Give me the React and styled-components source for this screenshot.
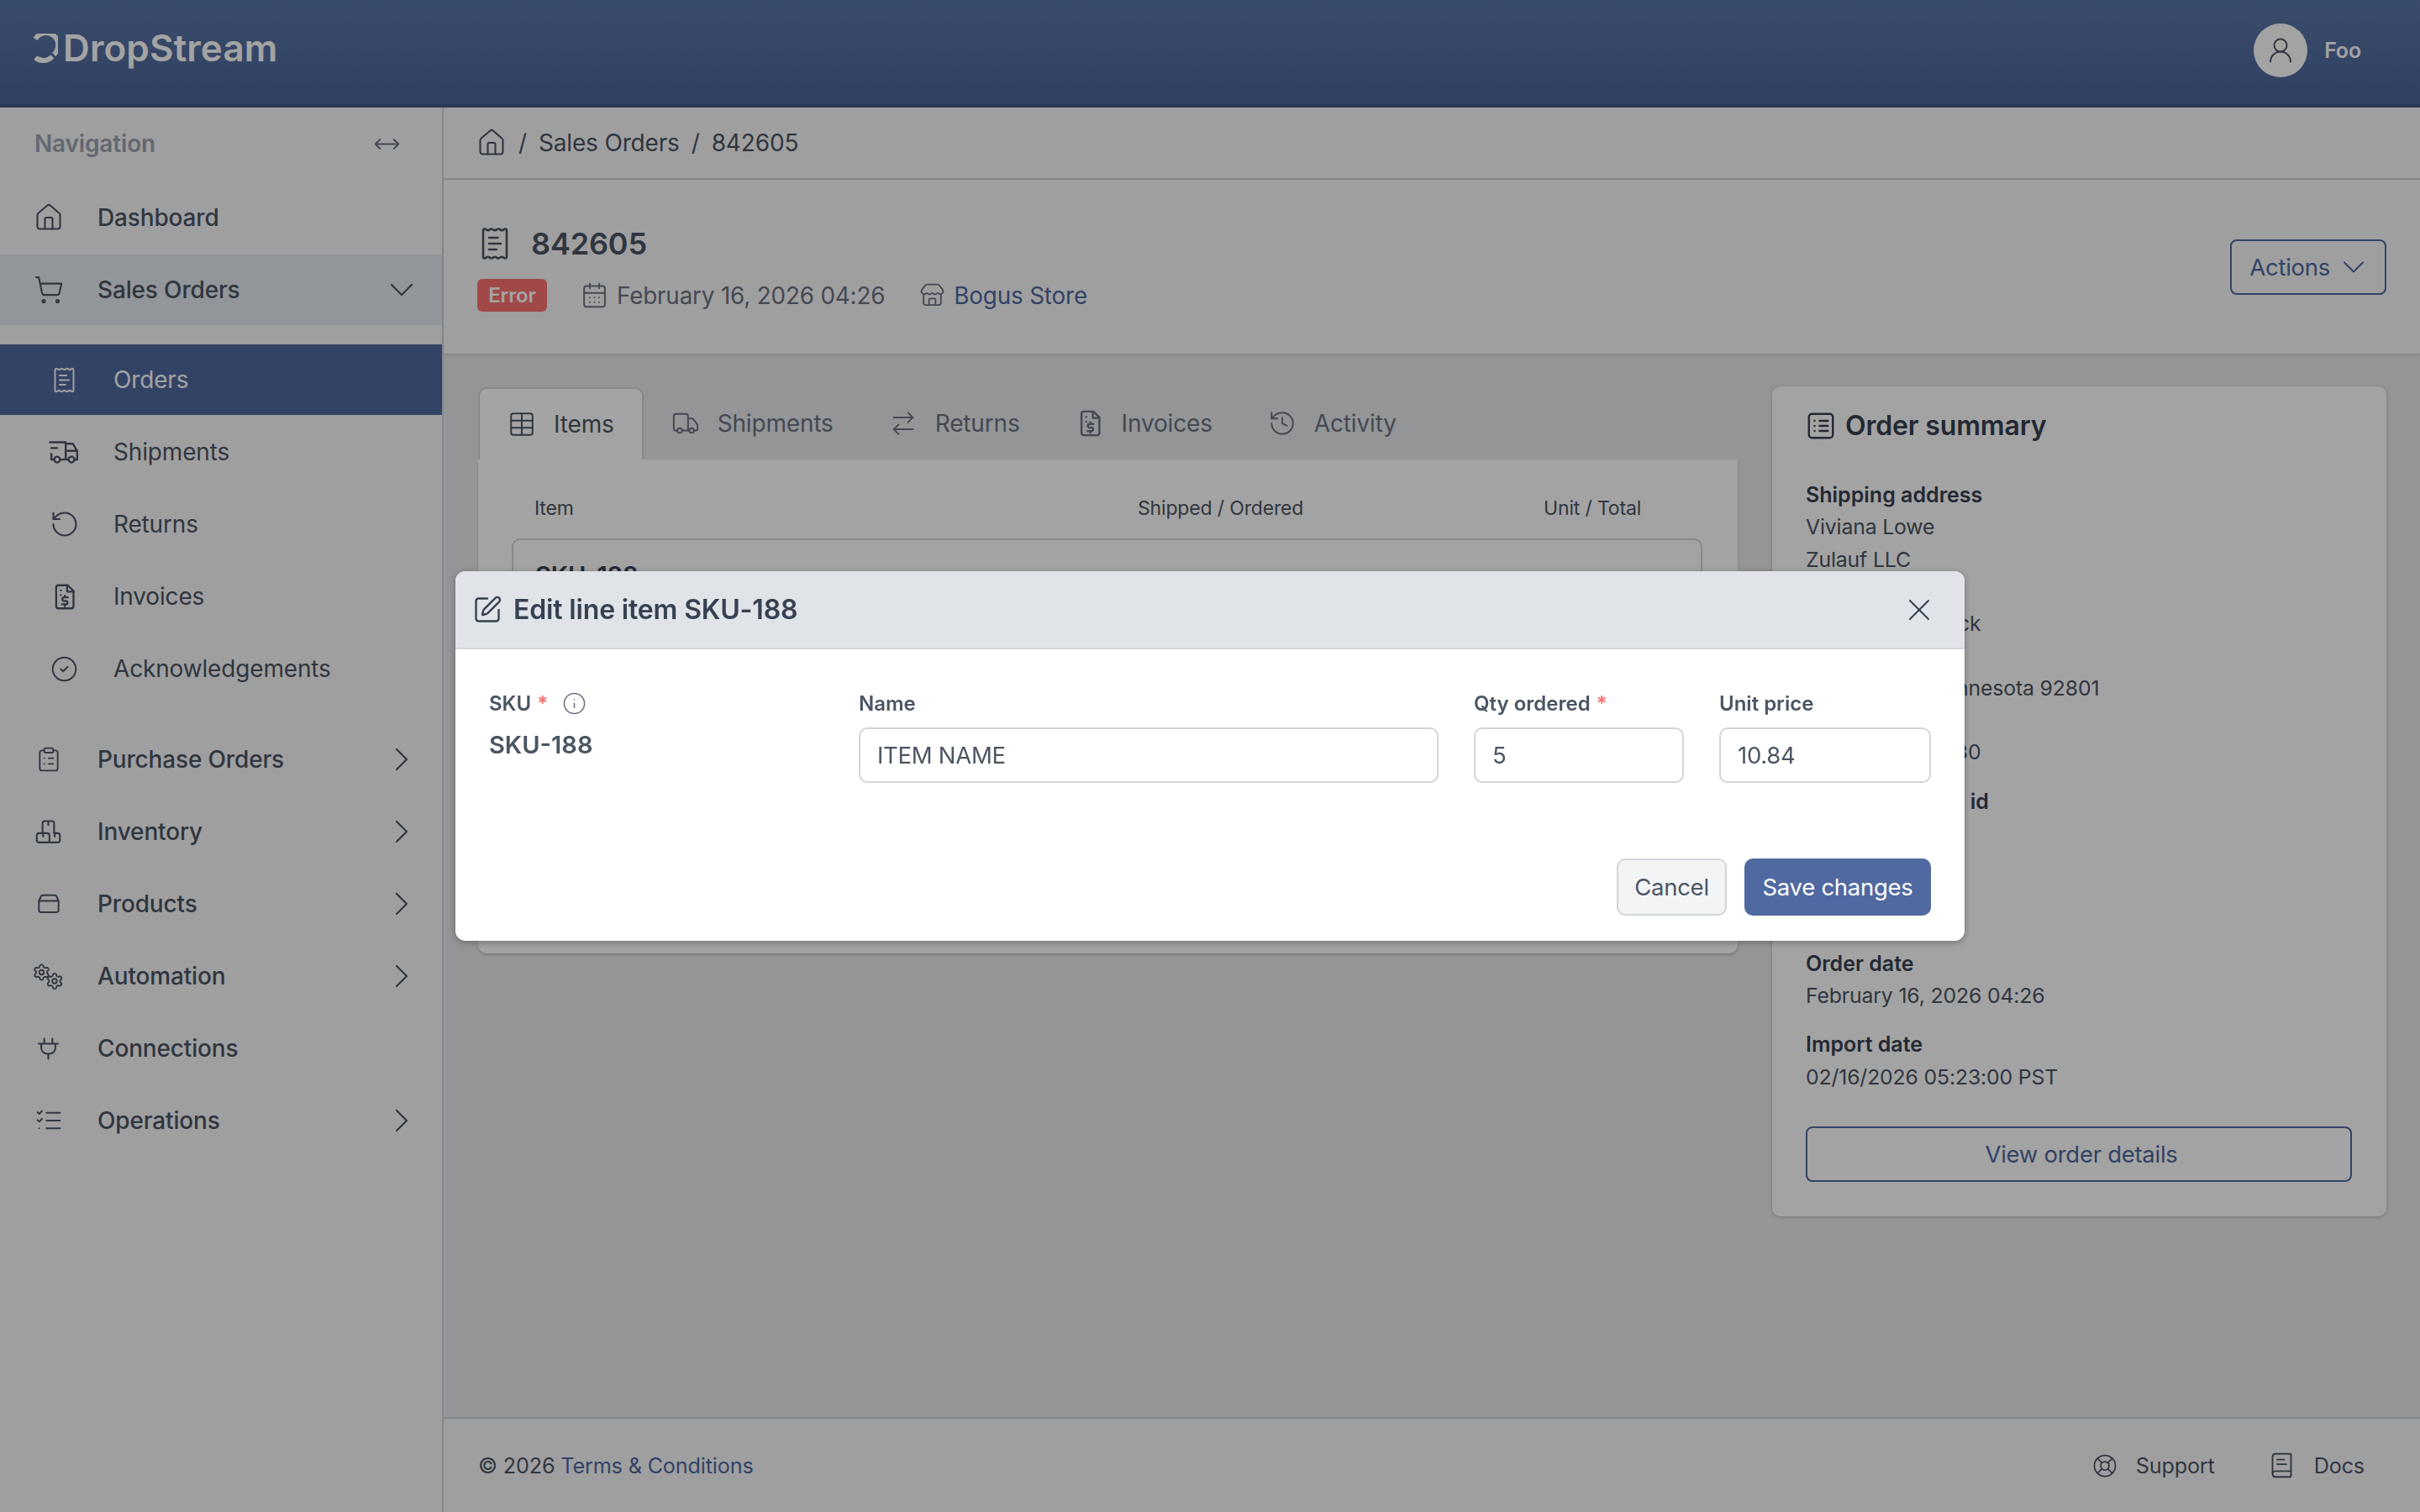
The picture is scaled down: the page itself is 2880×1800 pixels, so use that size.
import React from "react";
import styled, { createGlobalStyle } from "styled-components";
import {
  House,
  ShoppingCart,
  ReceiptText,
  RotateCcw,
  CircleCheck,
  ClipboardList,
  ChevronDown,
  ChevronRight,
  MoveHorizontal,
  UserRound,
  CalendarDays,
  Store,
  Table,
  Truck,
  ArrowRightLeft,
  History,
  SquarePen,
  Info,
  X,
  LifeBuoy,
  BookText,
  Settings,
} from "lucide-react";
import { TbTruckDelivery } from "react-icons/tb";

const primary = "#5069a0";
const panel = "#f9f9fb";
const font = `Inter, "Liberation Sans", sans-serif`;

const GlobalStyle = createGlobalStyle`
  * { box-sizing: border-box; }
  html, body { margin: 0; padding: 0; }
  body {
    font-family: ${font};
    letter-spacing: -0.01em;
    background: #e7e9ec;
    color: #374151;
  }
  svg { flex: none; }
`;

const Page = styled.div`
  display: grid;
  grid-template-columns: 528px 1fr;
  grid-template-rows: 128px 1fr;
  width: 2880px;
  height: 1800px;
  overflow: hidden;
`;

const TopBar = styled.header`
  grid-column: 1 / 3;
  display: flex;
  align-items: center;
  justify-content: space-between;
  padding: 0 70px 4px 34px;
  background: linear-gradient(#5b77a9, #4d6597);
  border-bottom: 4px solid #445a8c;
`;

const Logo = styled.div`
  display: flex;
  align-items: center;
  gap: 6px;
  margin-top: -6px;
  color: #fff;
  font-size: 44px;
  font-weight: 600;
  letter-spacing: 0.1px;
  line-height: 1;
`;

const UserMenu = styled.div`
  display: flex;
  align-items: center;
  gap: 20px;
  color: #fff;
  font-size: 25px;
  font-weight: 600;
`;

const Avatar = styled.div`
  display: flex;
  align-items: center;
  justify-content: center;
  width: 64px;
  height: 64px;
  border-radius: 50%;
  background: #fff;
  color: #4b5563;
`;

const Sidebar = styled.aside`
  background: ${panel};
  border-right: 2px solid #d1d5db;
`;

const NavHeader = styled.div`
  display: flex;
  align-items: center;
  justify-content: space-between;
  height: 86px;
  margin-bottom: 3px;
  padding: 0 49px 0 41px;
  color: #9ca3af;
  font-size: 28px;
  font-weight: 600;
`;

const NavList = styled.nav`
  display: flex;
  flex-direction: column;
  gap: 2px;
`;

const NavRow = styled.div`
  display: flex;
  align-items: center;
  height: 84px;
  padding: 0 24px 0 ${(p) => (p.$sub ? 60 : 41)}px;
  background: ${(p) => (p.$active ? primary : p.$open ? "#e4e9f0" : "transparent")};
  color: ${(p) => (p.$active ? "#fff" : "#4b5563")};
  font-size: 28px;
  font-weight: ${(p) => (p.$sub ? 400 : 500)};
`;

const NavIcon = styled.span`
  display: flex;
  justify-content: center;
  flex: none;
  width: 33px;
  margin-right: 42px;
`;

const NavLabel = styled.span`
  flex: 1;
`;

const SubNav = styled.div`
  display: flex;
  flex-direction: column;
  gap: 2px;
  margin: 21px 0 22px;
`;

const Main = styled.main`
  display: flex;
  flex-direction: column;
  min-width: 0;
`;

const Crumbs = styled.div`
  display: flex;
  align-items: center;
  gap: 14px;
  height: 86px;
  padding-left: 39px;
  background: ${panel};
  border-bottom: 2px solid #d1d5db;
  color: #4b5563;
  font-size: 28px;
`;

const PageHead = styled.section`
  display: flex;
  align-items: center;
  justify-content: space-between;
  height: 207px;
  padding: 0 40px;
  background: ${panel};
  box-shadow: 0 2px 4px rgba(0, 0, 0, 0.12);
`;

const HeadText = styled.div`
  display: flex;
  flex-direction: column;
  gap: 20px;
  padding-top: 4px;
`;

const Title = styled.h1`
  display: flex;
  align-items: center;
  gap: 22px;
  margin: 0;
  color: #4b5563;
  font-size: 36px;
  font-weight: 600;
  line-height: 44px;
`;

const Meta = styled.div`
  display: flex;
  align-items: center;
  color: #6b7280;
  font-size: 27.8px;
`;

const Badge = styled.span`
  width: 83px;
  height: 39px;
  margin-right: 40px;
  border-radius: 6px;
  background: #fc7272;
  color: #fff;
  font-size: 24px;
  font-weight: 600;
  line-height: 39px;
  text-align: center;
`;

const MetaItem = styled.span`
  display: flex;
  align-items: center;
  gap: 10px;
  margin-right: 41px;
`;

const Link = styled.a`
  color: ${primary};
`;

const OutlineButton = styled.button`
  display: flex;
  align-items: center;
  justify-content: center;
  gap: 6px;
  height: 66px;
  width: ${(p) => (p.$wide ? "100%" : "auto")};
  padding: 0 15px 0 21px;
  border: 2px solid ${primary};
  border-radius: 8px;
  background: transparent;
  color: ${primary};
  font-family: ${font};
  font-size: 27.5px;
  letter-spacing: -0.01em;
`;

const Content = styled.div`
  flex: 1;
  display: grid;
  grid-template-columns: 1fr 731px;
  gap: 41px;
  align-items: start;
  padding: 40px 40px 0 41px;
`;

const TabBar = styled.div`
  display: flex;
  height: 86px;
`;

const Tab = styled.div`
  display: flex;
  align-items: center;
  gap: 21px;
  padding: 0 33px;
  border: ${(p) => (p.$active ? "2px solid #d1d5db" : "none")};
  border-bottom: none;
  border-radius: 10px 10px 0 0;
  background: ${(p) => (p.$active ? "#fff" : "transparent")};
  color: ${(p) => (p.$active ? "#4b5563" : "#6b7280")};
  font-size: 28px;
`;

const TabBody = styled.div`
  height: 588px;
  padding: 0 42px 0 40px;
  background: #fff;
  border-radius: 0 0 10px 10px;
  box-shadow: 0 2px 3px rgba(0, 0, 0, 0.18);
`;

const ItemsHead = styled.div`
  display: grid;
  grid-template-columns: 718px 483px auto;
  align-items: center;
  height: 94px;
  padding: 22px 0 0 27px;
  color: #4b5563;
  font-size: 23px;
`;

const ItemCard = styled.div`
  height: 400px;
  padding: 24px 26px;
  border: 2px solid #d1d5db;
  border-radius: 10px;
  color: #374151;
  font-size: 29px;
  font-weight: 600;
`;

const Summary = styled.section`
  margin-top: -1px;
  padding: 25px 41px 41px 40px;
  border-radius: 10px;
  background: #fff;
  box-shadow: 0 1px 4px rgba(0, 0, 0, 0.2);
`;

const SummaryTitle = styled.h2`
  display: flex;
  align-items: center;
  gap: 11px;
  margin: 0 0 41px;
  color: #374151;
  font-size: 32px;
  font-weight: 600;
  line-height: 44px;
`;

const InfoGroup = styled.div`
  margin-bottom: 20px;
  color: #4b5563;
  font-size: 24.8px;
  line-height: 38.3px;
`;

const InfoLabel = styled.div`
  font-size: 25px;
  font-weight: 600;
  letter-spacing: 0;
  color: #374151;
`;

const Details = styled.div`
  margin-top: 40px;
`;

const Footer = styled.footer`
  display: flex;
  align-items: center;
  justify-content: space-between;
  height: 113px;
  padding: 0 66px 0 41px;
  background: ${panel};
  border-top: 2px solid #d1d5db;
  color: #4b5563;
  font-size: 25.2px;
`;

const FooterLinks = styled.div`
  display: flex;
  gap: 63px;
`;

const FooterLink = styled.span`
  display: flex;
  align-items: center;
  gap: 22px;
`;

const Backdrop = styled.div`
  position: fixed;
  inset: 0;
  display: flex;
  align-items: center;
  justify-content: center;
  background: rgba(0, 0, 0, 0.36);
`;

const Modal = styled.div`
  width: 1796px;
  height: 440px;
  display: flex;
  flex-direction: column;
  overflow: hidden;
  border-radius: 12px;
  background: #fff;
  box-shadow: 0 2px 8px rgba(0, 0, 0, 0.3);
`;

const ModalHead = styled.div`
  display: flex;
  align-items: center;
  justify-content: space-between;
  flex: none;
  height: 93px;
  padding: 0 32px 0 20px;
  background: #e0e3e8;
  border-bottom: 2px solid #d1d5db;
`;

const ModalTitle = styled.h3`
  display: flex;
  align-items: center;
  gap: 13px;
  margin: 0;
  color: #374151;
  font-size: 32px;
  font-weight: 600;
`;

const FormGrid = styled.div`
  flex: 1;
  display: grid;
  grid-template-columns: 398px 690px 250px 252px;
  gap: 42px;
  padding: 48px 40px 0 40px;
`;

const Field = styled.div`
  display: flex;
  flex-direction: column;
  gap: 13px;
`;

const FieldLabel = styled.label`
  display: flex;
  align-items: center;
  gap: 7px;
  height: 32px;
  color: #4b5563;
  font-size: 24px;
  font-weight: 600;
  letter-spacing: 0;
`;

const Required = styled.span`
  color: #f87171;
`;

const InfoMark = styled.span`
  display: flex;
  margin-left: 10px;
  color: #6b7280;
`;

const ReadOnly = styled.div`
  margin-top: 3px;
  color: #4b5563;
  font-size: 29px;
  font-weight: 600;
  letter-spacing: 0;
`;

const Input = styled.input`
  width: 100%;
  height: 66px;
  padding: 0 20px;
  border: 2px solid #d1d5db;
  border-radius: 10px;
  background: #fff;
  color: #4b5563;
  font-family: ${font};
  font-size: 27.5px;
  letter-spacing: -0.01em;
`;

const ModalFoot = styled.div`
  display: flex;
  justify-content: flex-end;
  gap: 21px;
  padding: 0 40px 30px;
`;

const CancelButton = styled.button`
  width: 131px;
  height: 68px;
  border: 2px solid #d1d5db;
  border-radius: 10px;
  background: #f3f4f6;
  color: #4b5563;
  font-family: ${font};
  font-size: 27.5px;
  letter-spacing: -0.01em;
`;

const SaveButton = styled.button`
  width: 222px;
  height: 68px;
  border: none;
  border-radius: 10px;
  background: ${primary};
  color: #fff;
  font-family: ${font};
  font-size: 27.5px;
  letter-spacing: -0.01em;
`;

// the icon packages have no match for these ones, so they are drawn here
const LogoMark = () => (
  <svg width="35" height="35" viewBox="0 0 35 35" fill="none" stroke="currentColor" strokeWidth="6">
    <path d="M8.18 6.39A14.500 14.500 0 1 1 30.060 24.750" />
    <path d="M28.280 27.200A14.500 14.500 0 0 1 8.180 28.610" />
  </svg>
);

const Outline = ({ size = 24, width = 1.6, children }) => (
  <svg
    width={size}
    height={size}
    viewBox="0 0 24 24"
    fill="none"
    stroke="currentColor"
    strokeWidth={width}
    strokeLinecap="round"
    strokeLinejoin="round"
  >
    {children}
  </svg>
);

const InvoiceIcon = ({ size }) => (
  <Outline size={size} width={1.7}>
    <path d="M7 2h8l5 5v13a2 2 0 0 1-2 2H7a2 2 0 0 1-2-2V4a2 2 0 0 1 2-2Z" />
    <path d="M14.500 2v5.500H20" />
    <path d="M9 6.500h.01M9 10.500h.01" />
    <path d="M15 12.500h-3.200a1.500 1.500 0 0 0 0 3h1.400a1.500 1.500 0 0 1 0 3H10M12.500 11v1.500M12.500 18.500V20" />
  </Outline>
);

const PackagesIcon = ({ size }) => (
  <Outline size={size} width={1.5}>
    <path d="M7 12.500V4.500a2 2 0 0 1 2-2h6a2 2 0 0 1 2 2v8M12 2.500V6" />
    <rect x="2" y="13" width="11" height="8" rx="2" />
    <path d="M7.500 13v3M17 13h3a2 2 0 0 1 2 2v4a2 2 0 0 1-2 2h-7M17.500 13v3" />
  </Outline>
);

const ProductIcon = ({ size }) => (
  <Outline size={size} width={1.7}>
    <path d="M2 9 4 4.500A2 2 0 0 1 5.800 3.200h12.400A2 2 0 0 1 20 4.500L22 9v9.500a2 2 0 0 1-2 2H4a2 2 0 0 1-2-2Z" />
    <path d="M2 9h20" />
  </Outline>
);

const GearsIcon = () => (
  <svg width="33" height="33" viewBox="0 0 33 33" overflow="visible">
    <Settings x="-2.500" y="0.500" width="22" height="22" strokeWidth="2" />
    <Settings x="13" y="11" width="22" height="22" strokeWidth="2" />
  </svg>
);

const PlugIcon = ({ size }) => (
  <Outline size={size} width={1.7}>
    <path d="M8 2v5M16 2v5M2.500 7h19M5 7v4a6 6 0 0 0 6 6h2a6 6 0 0 0 6-6V7M12 17v5" />
  </Outline>
);

const TaskListIcon = ({ size }) => (
  <Outline size={size} width={1.5}>
    <path d="M10 5h12M10 12h12M10 19h12" />
    <path d="m2 4.500 1.500 1.500L6 3.500M2 11.500l1.500 1.500L6 10.500M3.500 19h.01" />
  </Outline>
);

const SummaryIcon = ({ size }) => (
  <Outline size={size} width={1.6}>
    <rect x="2.500" y="2.500" width="19" height="19" rx="2.500" />
    <path d="M7 8h.01M7 12h.01M7 16h.01M11 8h6.500M11 12h6.500M11 16h6.500" />
  </Outline>
);

const NavItem = ({ icon, label, chevron, ...rest }) => (
  <NavRow {...rest}>
    <NavIcon>{icon}</NavIcon>
    <NavLabel>{label}</NavLabel>
    {chevron === "down" && <ChevronDown size={48} strokeWidth={1.1} />}
    {chevron === "right" && <ChevronRight size={48} strokeWidth={1.1} />}
  </NavRow>
);

const sw = 1.4;

const subItems = [
  { label: "Orders", icon: <ReceiptText size={33} strokeWidth={sw} />, active: true },
  { label: "Shipments", icon: <TbTruckDelivery size={41} strokeWidth={1.4} /> },
  { label: "Returns", icon: <RotateCcw size={36} strokeWidth={sw} /> },
  { label: "Invoices", icon: <InvoiceIcon size={33} /> },
  { label: "Acknowledgements", icon: <CircleCheck size={33} strokeWidth={sw} /> },
];

const lowerItems = [
  { label: "Purchase Orders", icon: <ClipboardList size={32} strokeWidth={sw} />, chevron: "right" },
  { label: "Inventory", icon: <PackagesIcon size={33} />, chevron: "right" },
  { label: "Products", icon: <ProductIcon size={28} />, chevron: "right" },
  { label: "Automation", icon: <GearsIcon />, chevron: "right" },
  { label: "Connections", icon: <PlugIcon size={29} /> },
  { label: "Operations", icon: <TaskListIcon size={32} />, chevron: "right" },
];

const tabs = [
  { label: "Items", icon: <Table size={34} strokeWidth={sw} />, active: true },
  { label: "Shipments", icon: <Truck size={34} strokeWidth={sw} /> },
  { label: "Returns", icon: <ArrowRightLeft size={34} strokeWidth={sw} /> },
  { label: "Invoices", icon: <InvoiceIcon size={34} /> },
  { label: "Activity", icon: <History size={34} strokeWidth={sw} /> },
];

export default function App() {
  return (
    <>
      <GlobalStyle />
      <Page>
        <TopBar>
          <Logo>
            <LogoMark />
            DropStream
          </Logo>
          <UserMenu>
            <Avatar>
              <UserRound size={36} strokeWidth={1.3} />
            </Avatar>
            Foo
          </UserMenu>
        </TopBar>

        <Sidebar>
          <NavHeader>
            Navigation
            <MoveHorizontal size={33} strokeWidth={1.3} color="#6b7280" />
          </NavHeader>
          <NavList>
            <NavItem icon={<House size={36} strokeWidth={sw} />} label="Dashboard" />
            <NavItem
              $open
              icon={<ShoppingCart size={36} strokeWidth={sw} />}
              label="Sales Orders"
              chevron="down"
            />
            <SubNav>
              {subItems.map((item) => (
                <NavItem key={item.label} $sub $active={item.active} icon={item.icon} label={item.label} />
              ))}
            </SubNav>
            {lowerItems.map((item) => (
              <NavItem key={item.label} icon={item.icon} label={item.label} chevron={item.chevron} />
            ))}
          </NavList>
        </Sidebar>

        <Main>
          <Crumbs>
            <House size={36} strokeWidth={sw} />
            <span>/</span>
            <span>Sales Orders</span>
            <span>/</span>
            <span>842605</span>
          </Crumbs>

          <PageHead>
            <HeadText>
              <Title>
                <ReceiptText size={42} strokeWidth={1.5} />
                842605
              </Title>
              <Meta>
                <Badge>Error</Badge>
                <MetaItem>
                  <CalendarDays size={33} strokeWidth={sw} />
                  February 16, 2026 04:26
                </MetaItem>
                <MetaItem>
                  <Store size={31} strokeWidth={sw} />
                  <Link>Bogus Store</Link>
                </MetaItem>
              </Meta>
            </HeadText>
            <OutlineButton>
              Actions
              <ChevronDown size={44} strokeWidth={1.1} />
            </OutlineButton>
          </PageHead>

          <Content>
            <div>
              <TabBar>
                {tabs.map((tab) => (
                  <Tab key={tab.label} $active={tab.active}>
                    {tab.icon}
                    {tab.label}
                  </Tab>
                ))}
              </TabBar>
              <TabBody>
                <ItemsHead>
                  <span>Item</span>
                  <span>Shipped / Ordered</span>
                  <span>Unit / Total</span>
                </ItemsHead>
                <ItemCard>SKU-188</ItemCard>
              </TabBody>
            </div>

            <Summary>
              <SummaryTitle>
                <SummaryIcon size={36} />
                Order summary
              </SummaryTitle>
              <InfoGroup>
                <InfoLabel>Shipping address</InfoLabel>
                <div>Viviana Lowe</div>
                <div>Zulauf LLC</div>
                <div>&nbsp;</div>
                <div>West Port Merrick</div>
                <div>&nbsp;</div>
                <div>East Hetties, Minnesota 92801</div>
                <div>&nbsp;</div>
                <div>+1 555 0100 2330</div>
              </InfoGroup>
              <InfoGroup>
                <InfoLabel>Customer party id</InfoLabel>
                <div>&nbsp;</div>
              </InfoGroup>
              <InfoGroup>
                <div>&nbsp;</div>
                <div>&nbsp;</div>
              </InfoGroup>
              <InfoGroup>
                <InfoLabel>Order date</InfoLabel>
                <div>February 16, 2026 04:26</div>
              </InfoGroup>
              <InfoGroup>
                <InfoLabel>Import date</InfoLabel>
                <div>02/16/2026 05:23:00 PST</div>
              </InfoGroup>
              <Details>
                <OutlineButton $wide>View order details</OutlineButton>
              </Details>
            </Summary>
          </Content>

          <Footer>
            <span>
              © 2026 <Link>Terms &amp; Conditions</Link>
            </span>
            <FooterLinks>
              <FooterLink>
                <LifeBuoy size={30} strokeWidth={sw} />
                Support
              </FooterLink>
              <FooterLink>
                <BookText size={33} strokeWidth={sw} />
                Docs
              </FooterLink>
            </FooterLinks>
          </Footer>
        </Main>
      </Page>

      <Backdrop>
        <Modal>
          <ModalHead>
            <ModalTitle>
              <SquarePen size={36} strokeWidth={1.6} />
              Edit line item SKU-188
            </ModalTitle>
            <X size={44} strokeWidth={1.1} color="#374151" />
          </ModalHead>
          <FormGrid>
            <Field>
              <FieldLabel>
                SKU <Required>*</Required>
                <InfoMark>
                  <Info size={29} strokeWidth={1.3} />
                </InfoMark>
              </FieldLabel>
              <ReadOnly>SKU-188</ReadOnly>
            </Field>
            <Field>
              <FieldLabel>Name</FieldLabel>
              <Input defaultValue="ITEM NAME" />
            </Field>
            <Field>
              <FieldLabel>
                Qty ordered <Required>*</Required>
              </FieldLabel>
              <Input defaultValue="5" />
            </Field>
            <Field>
              <FieldLabel>Unit price</FieldLabel>
              <Input defaultValue="10.84" />
            </Field>
          </FormGrid>
          <ModalFoot>
            <CancelButton>Cancel</CancelButton>
            <SaveButton>Save changes</SaveButton>
          </ModalFoot>
        </Modal>
      </Backdrop>
    </>
  );
}
